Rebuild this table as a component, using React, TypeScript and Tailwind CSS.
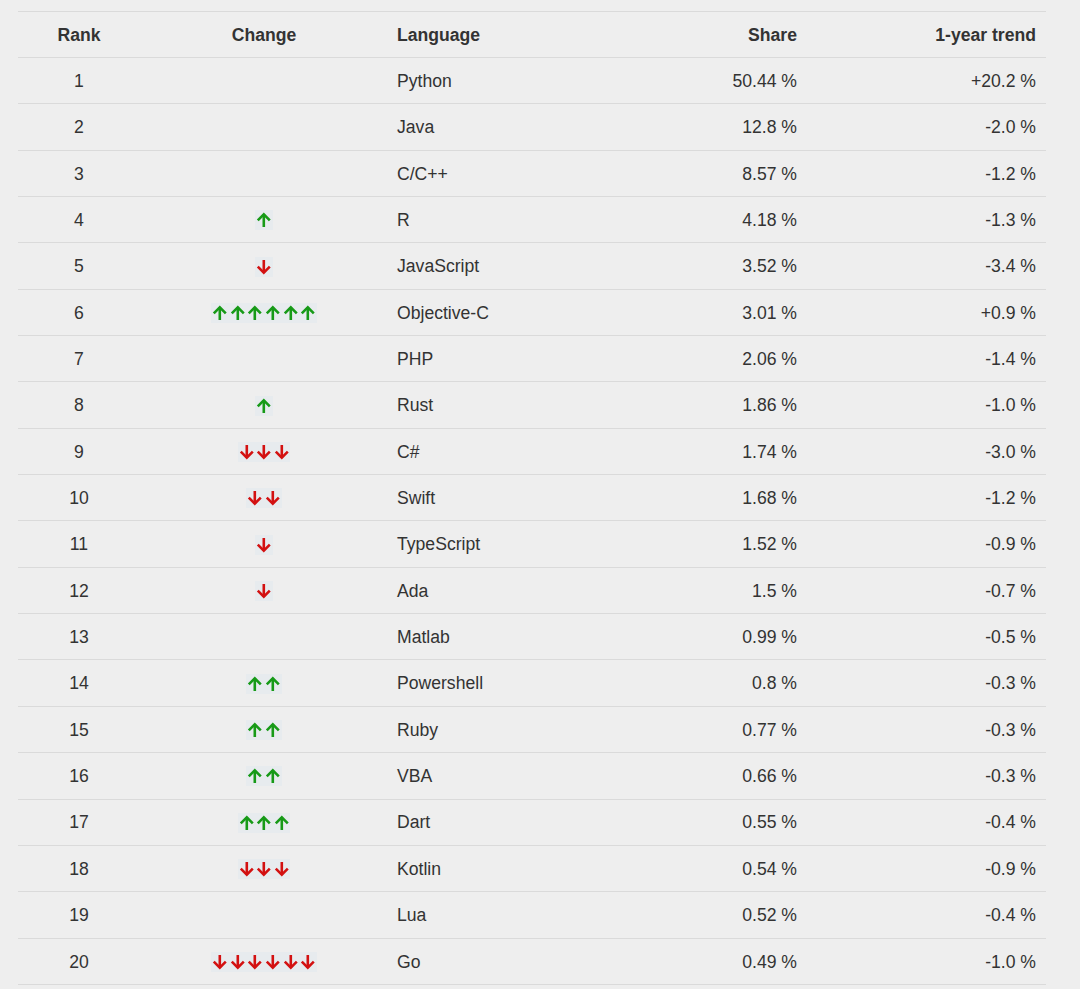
const rows: [number, number, string, string, string][] = [
  [1, 0, "Python", "50.44 %", "+20.2 %"],
  [2, 0, "Java", "12.8 %", "-2.0 %"],
  [3, 0, "C/C++", "8.57 %", "-1.2 %"],
  [4, 1, "R", "4.18 %", "-1.3 %"],
  [5, -1, "JavaScript", "3.52 %", "-3.4 %"],
  [6, 6, "Objective-C", "3.01 %", "+0.9 %"],
  [7, 0, "PHP", "2.06 %", "-1.4 %"],
  [8, 1, "Rust", "1.86 %", "-1.0 %"],
  [9, -3, "C#", "1.74 %", "-3.0 %"],
  [10, -2, "Swift", "1.68 %", "-1.2 %"],
  [11, -1, "TypeScript", "1.52 %", "-0.9 %"],
  [12, -1, "Ada", "1.5 %", "-0.7 %"],
  [13, 0, "Matlab", "0.99 %", "-0.5 %"],
  [14, 2, "Powershell", "0.8 %", "-0.3 %"],
  [15, 2, "Ruby", "0.77 %", "-0.3 %"],
  [16, 2, "VBA", "0.66 %", "-0.3 %"],
  [17, 3, "Dart", "0.55 %", "-0.4 %"],
  [18, -3, "Kotlin", "0.54 %", "-0.9 %"],
  [19, 0, "Lua", "0.52 %", "-0.4 %"],
  [20, -6, "Go", "0.49 %", "-1.0 %"],
];

function Arrow({ up }: { up: boolean }) {
  const color = up ? "#179a17" : "#d31111";
  return (
    <svg width="17.6" height="20" viewBox="0 0 17.6 20" className="block">
      <g
        fill="none"
        stroke={color}
        strokeWidth="2.6"
        strokeLinecap="butt"
        strokeLinejoin="miter"
        transform={up ? undefined : "rotate(180 8.8 10)"}
      >
        <path d="M8.8 4.2 V17" />
        <path d="M2.8 10.4 L8.8 4.4 L14.8 10.4" />
      </g>
    </svg>
  );
}

function Change({ n }: { n: number }) {
  if (n === 0) return null;
  const up = n > 0;
  return (
    <div className="flex bg-[#e7ebee]">
      {Array.from({ length: Math.abs(n) }).map((_, i) => (
        <Arrow key={i} up={up} />
      ))}
    </div>
  );
}

export default function App() {
  return (
    <div className="min-h-[989px] bg-[#eeeeee] pl-[18px] pr-[34px] pt-[11px] pb-[4px] font-['Liberation_Sans',Arial,sans-serif] text-[17.6px] text-[#333333]">
      <div className="border-t border-[#dadada]">
        <div className="grid h-[46px] grid-cols-[122px_248px_1fr_200px_240px] items-center border-b border-[#dadada] pt-[2px] font-bold">
          <div className="text-center">Rank</div>
          <div className="text-center">Change</div>
          <div className="pl-[9px]">Language</div>
          <div className="pr-[9px] text-right">Share</div>
          <div className="pr-[10px] text-right">1-year trend</div>
        </div>
        {rows.map(([rank, change, lang, share, trend]) => (
          <div
            key={rank}
            className="grid h-[46.35px] grid-cols-[122px_248px_1fr_200px_240px] items-center border-b border-[#dadada] pt-[1px]"
          >
            <div className="text-center">{rank}</div>
            <div className="flex justify-center">
              <Change n={change} />
            </div>
            <div className="pl-[9px]">{lang}</div>
            <div className="pr-[9px] text-right">{share}</div>
            <div className="pr-[10px] text-right">{trend}</div>
          </div>
        ))}
      </div>
    </div>
  );
}
